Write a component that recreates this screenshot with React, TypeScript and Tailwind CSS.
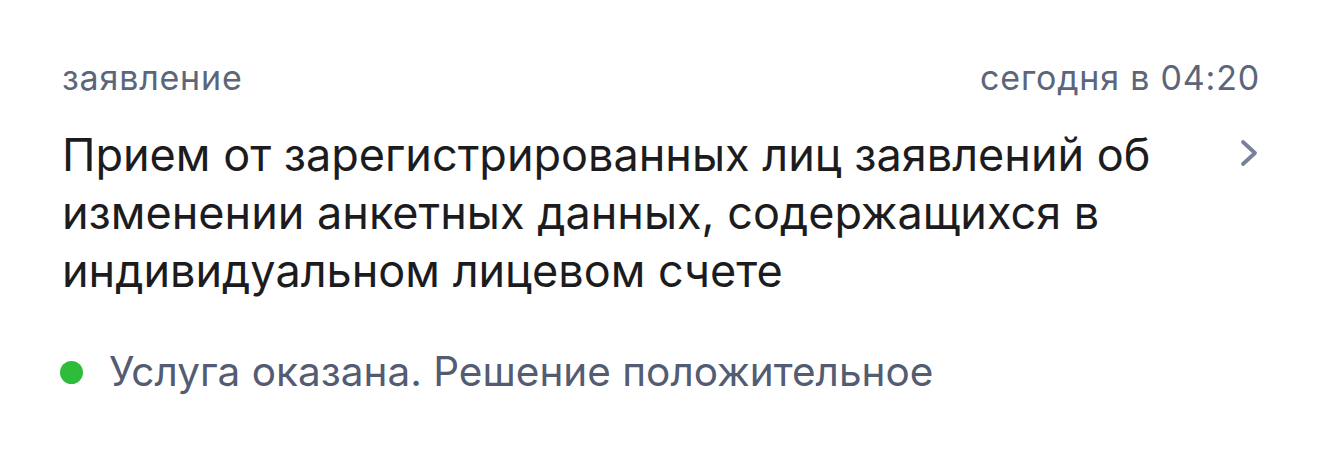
import React from 'react';

export default function App() {
  return (
    <div
      className="w-[1320px] h-[453px] bg-white pl-[62px] pr-[60px] pt-[56px]"
      style={{ fontFamily: 'Inter, "Noto Sans", sans-serif' }}
    >
      <div className="flex items-center justify-between">
        <span className="text-[34px] leading-[44px] text-[#5c667a] tracking-[0.8px]">заявление</span>
        <span className="text-[34px] leading-[44px] text-[#5c667a] tracking-[0.8px]">сегодня в 04:20</span>
      </div>
      <div className="flex items-start mt-[26px]">
        <h2 className="flex-1 text-[45px] leading-[58px] text-[#1c1c1e] font-normal pr-[60px]">
          Прием от зарегистрированных лиц заявлений об изменении анкетных данных, содержащихся в
          индивидуальном лицевом счете
        </h2>
        <svg width="22" height="30" viewBox="0 0 22 30" className="shrink-0 mt-[12px]" fill="none">
          <path d="M5 4 L17 15 L5 26" stroke="#78819a" strokeWidth="3.8" strokeLinecap="round" strokeLinejoin="round" />
        </svg>
      </div>
      <div className="flex items-center gap-[26px] mt-[48px]">
        <span className="w-[23px] h-[23px] rounded-full bg-[#2ebd3a] -ml-[2px]" />
        <span className="text-[40.5px] leading-[48px] text-[#535c72]">Услуга оказана. Решение положительное</span>
      </div>
    </div>
  );
}
